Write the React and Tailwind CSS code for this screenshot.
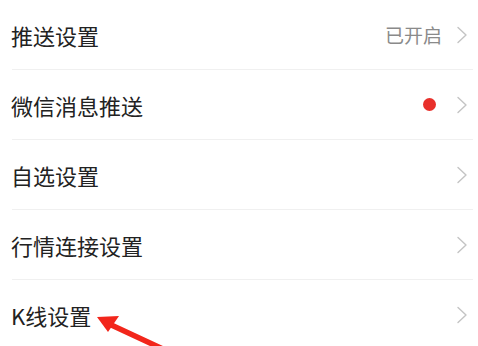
import React from 'react'

const rows = [
  { title: '推送设置', value: '已开启' },
  { title: '微信消息推送', dot: true },
  { title: '自选设置' },
  { title: '行情连接设置' },
  { title: 'K线设置' },
]

const Chevron = () => (
  <svg width="12" height="18" viewBox="0 0 12 18" fill="none" className="shrink-0">
    <path d="M2 1.5 L10 9 L2 16.5" stroke="#c4c4c4" strokeWidth="1.4" strokeLinecap="round" strokeLinejoin="round" />
  </svg>
)

const App = () => {
  return (
    <div className="relative w-[478px] h-[346px] overflow-hidden bg-white" style={{ fontFamily: '"Noto Sans CJK SC", "Noto Sans", sans-serif' }}>
      {rows.map((row, i) => (
        <div key={i}>
          <div className="h-[69px] flex items-center pl-[11px] pr-[10px]">
            <span className="flex-1 text-[22px] text-[#222] leading-none">{row.title}</span>
            {row.value && <span className="text-[19px] text-[#8a8a8a] mr-[14px] leading-none">{row.value}</span>}
            {row.dot && <span className="w-[13px] h-[13px] rounded-full bg-[#e8302b] mr-[20px]"></span>}
            <Chevron />
          </div>
          {i < rows.length - 1 && <div className="h-px bg-[#f0f0f0] ml-[12px] mr-[5px]"></div>}
        </div>
      ))}

      {/* red annotation arrow */}
      <svg className="absolute left-0 top-0" width="478" height="346" viewBox="0 0 478 346">
        <line x1="165" y1="350" x2="107" y2="323" stroke="#f2261b" strokeWidth="5.5" strokeLinecap="round" />
        <polygon points="97,317 119,316 108,332" fill="#f2261b" />
      </svg>
    </div>
  )
}

export default App
